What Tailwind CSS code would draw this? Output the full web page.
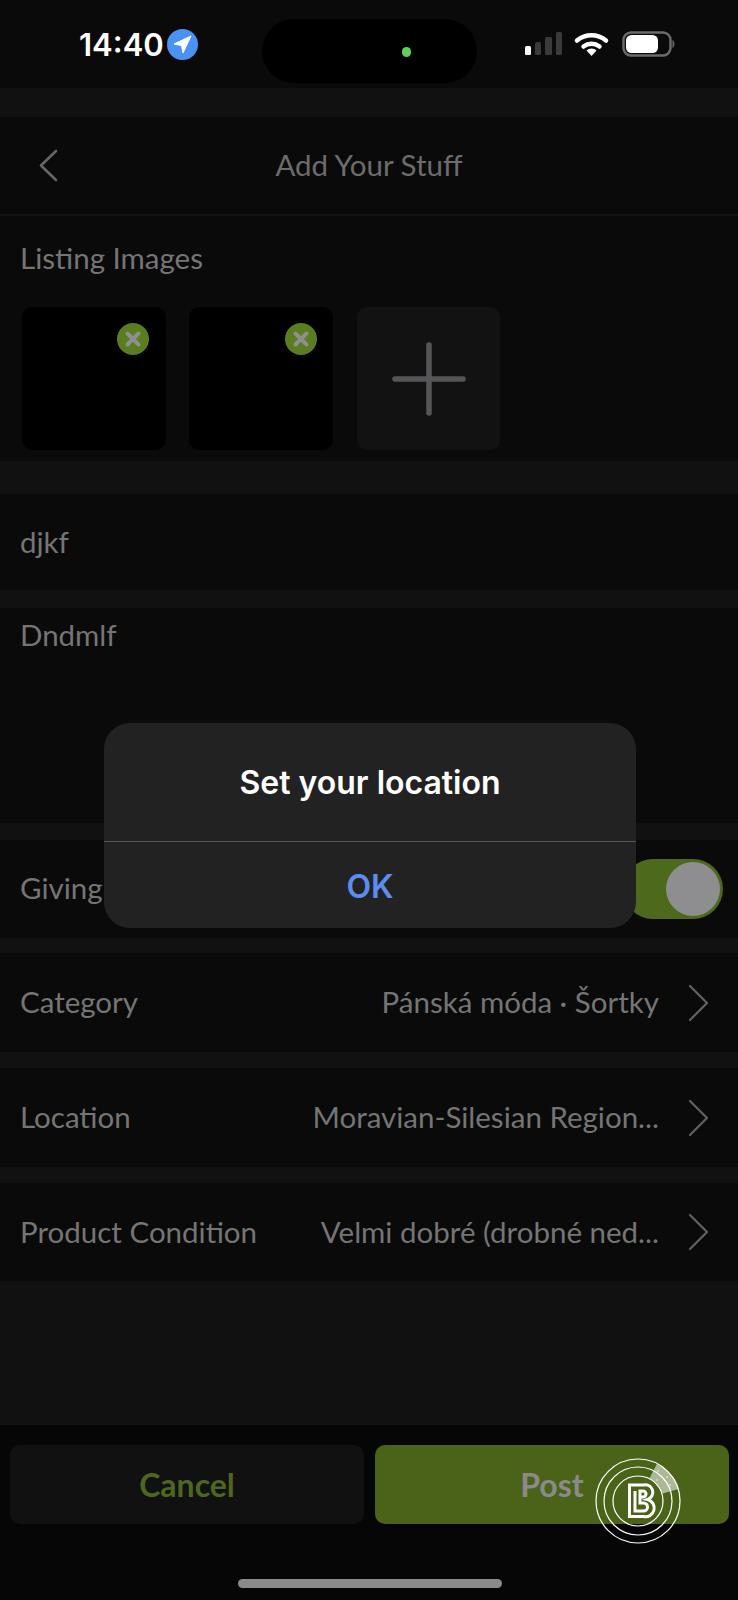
<!DOCTYPE html>
<html>
<head>
<meta charset="utf-8">
<script src="https://cdn.jsdelivr.net/npm/@tailwindcss/browser@4"></script>
</head>
<body class="m-0 bg-[#111111]">
<div class="relative w-[738px] h-[1600px] overflow-hidden flex flex-col bg-[#111111] font-['Lato','Liberation_Sans',sans-serif] text-[29.5px] text-[#757575]">

  <!-- status bar -->
  <div class="h-[88px] shrink-0 bg-[#0a0a0a] flex items-center pl-[79px]">
    <span class="w-[84px] font-['Inter',sans-serif] font-semibold text-[31px] text-white leading-none">14:40</span>
    <svg class="ml-[4px]" width="31" height="31" viewBox="0 0 31 31"><circle cx="15.5" cy="15.5" r="15.5" fill="#4a93f5"/><path d="M24 7 L7 15 L14.5 16.5 L16 24 Z" fill="#fff" stroke="#fff" stroke-width="1" stroke-linejoin="round"/></svg>
    <div class="ml-[64px] w-[215px] h-[64px] mt-[13px] rounded-[32px] bg-black flex items-center justify-start pl-[140px]">
      <span class="block w-[9px] h-[10px] rounded-full bg-[#5fcf5f] mt-[2px]"></span>
    </div>
    <svg class="ml-[48px]" width="150" height="30" viewBox="0 0 150 30">
      <rect x="0" y="17" width="6" height="9" rx="1.5" fill="#fff"/>
      <rect x="10" y="13" width="6" height="13" rx="1.5" fill="#3a3a3a"/>
      <rect x="20" y="8" width="7" height="18" rx="1.5" fill="#3a3a3a"/>
      <rect x="31" y="3" width="6" height="23" rx="1.5" fill="#3a3a3a"/>
      <path d="M52 11.5 A23 23 0 0 1 81 11.5" fill="none" stroke="#fff" stroke-width="4.5" stroke-linecap="round"/>
      <path d="M58.5 17.5 A13.5 13.5 0 0 1 74.5 17.5" fill="none" stroke="#fff" stroke-width="4.5" stroke-linecap="round"/>
      <path d="M66.5 27 L61.5 21.5 A7 7 0 0 1 71.5 21.5 Z" fill="#fff"/>
      <rect x="98.5" y="3.5" width="47" height="23" rx="7.5" fill="none" stroke="#6a6a6a" stroke-width="2.5"/>
      <rect x="101" y="6" width="32" height="18" rx="5.5" fill="#fff"/>
      <path d="M147.5 11 C150 12 150 18 147.5 19 Z" fill="#6a6a6a"/>
    </svg>
  </div>

  <!-- header -->
  <div class="mt-[29px] h-[99px] shrink-0 bg-[#0a0a0a] border-b-2 border-[#141414] flex items-center justify-center relative">
    <svg class="absolute left-[37px] top-[31px]" width="22" height="35" viewBox="0 0 22 35"><path d="M19 3 L4 17.5 L19 32" fill="none" stroke="#666666" stroke-width="2.6" stroke-linecap="round" stroke-linejoin="round"/></svg>
    <span class="text-[#6c6c6c]">Add Your Stuff</span>
  </div>

  <!-- listing images -->
  <div class="h-[245px] shrink-0 bg-[#0a0a0a] pl-[22px] relative">
    <div class="absolute left-[20px] top-[23px] leading-[38px]">Listing Images</div>
    <div class="pt-[91px] flex">
      <div class="relative w-[144px] h-[143px] rounded-[10px] bg-black">
        <svg class="absolute left-[95px] top-[16px]" width="32" height="32" viewBox="0 0 32 32"><circle cx="16" cy="16" r="16" fill="#5a7d20"/><path d="M10.5 10.5 L21.5 21.5 M21.5 10.5 L10.5 21.5" stroke="#8f8f8f" stroke-width="4" stroke-linecap="round"/></svg>
      </div>
      <div class="relative ml-[23px] w-[144px] h-[143px] rounded-[10px] bg-black">
        <svg class="absolute left-[96px] top-[16px]" width="32" height="32" viewBox="0 0 32 32"><circle cx="16" cy="16" r="16" fill="#5a7d20"/><path d="M10.5 10.5 L21.5 21.5 M21.5 10.5 L10.5 21.5" stroke="#8f8f8f" stroke-width="4" stroke-linecap="round"/></svg>
      </div>
      <div class="ml-[24px] w-[143px] h-[143px] rounded-[10px] bg-[#121212] flex items-center justify-center">
        <svg width="74" height="74" viewBox="0 0 74 74"><path d="M37 3 V71 M3 37 H71" stroke="#565658" stroke-width="5.5" stroke-linecap="round"/></svg>
      </div>
    </div>
  </div>

  <!-- title -->
  <div class="mt-[33px] h-[96px] shrink-0 bg-[#0a0a0a] flex items-center px-[20px]">djkf</div>

  <!-- description -->
  <div class="mt-[18px] h-[215px] shrink-0 bg-[#0a0a0a] px-[20px] pt-[8px] leading-[38px]">Dndmlf</div>

  <!-- giving -->
  <div class="mt-[17px] h-[98px] shrink-0 bg-[#0a0a0a] flex items-center justify-between pl-[20px] pr-[15px]">
    <span class="-mt-[2px]">Giving</span>
    <div class="w-[100px] h-[60px] rounded-[30px] bg-[#4d6a1c] flex items-center justify-end pr-[3px]">
      <span class="block w-[54px] h-[54px] rounded-full bg-[#8e8e90]"></span>
    </div>
  </div>

  <!-- category -->
  <div class="mt-[15px] h-[99px] shrink-0 bg-[#0a0a0a] flex items-center pl-[20px] pr-[28px]">
    <span>Category</span>
    <span class="ml-auto">Pánská móda · Šortky</span>
    <svg class="ml-[28px]" width="23" height="38" viewBox="0 0 23 38"><path d="M3 2 L20 19 L3 36" fill="none" stroke="#626262" stroke-width="2.2" stroke-linecap="round" stroke-linejoin="round"/></svg>
  </div>

  <!-- location -->
  <div class="mt-[16px] h-[99px] shrink-0 bg-[#0a0a0a] flex items-center pl-[20px] pr-[28px]">
    <span>Location</span>
    <span class="ml-auto">Moravian-Silesian Region...</span>
    <svg class="ml-[28px]" width="23" height="38" viewBox="0 0 23 38"><path d="M3 2 L20 19 L3 36" fill="none" stroke="#626262" stroke-width="2.2" stroke-linecap="round" stroke-linejoin="round"/></svg>
  </div>

  <!-- condition -->
  <div class="mt-[16px] h-[98px] shrink-0 bg-[#0a0a0a] flex items-center pl-[20px] pr-[28px]">
    <span>Product Condition</span>
    <span class="ml-auto">Velmi dobré (drobné ned...</span>
    <svg class="ml-[28px]" width="23" height="38" viewBox="0 0 23 38"><path d="M3 2 L20 19 L3 36" fill="none" stroke="#626262" stroke-width="2.2" stroke-linecap="round" stroke-linejoin="round"/></svg>
  </div>

  <!-- footer -->
  <div class="mt-auto h-[175px] shrink-0 bg-[#060606] pt-[20px] pl-[10px] pr-[9px] flex flex-col items-center">
    <div class="w-full flex gap-[11px]">
      <div class="flex-1 h-[79px] rounded-[10px] bg-[#111111] flex items-center justify-center font-bold text-[32px] text-[#4f6620]">Cancel</div>
      <div class="flex-1 h-[79px] rounded-[10px] bg-[#4a6319] flex items-center justify-center font-bold text-[32px] text-[#8a8a8a]">Post</div>
    </div>
    <div class="mt-[55px] w-[264px] h-[9px] rounded-full bg-[#8a8a8a]"></div>
  </div>

  <!-- alert -->
  <div class="absolute left-[104px] top-[723px] w-[532px] h-[205px] rounded-[26px] bg-[#222222] flex flex-col font-['Inter',sans-serif]">
    <div class="h-[119px] flex items-center justify-center pt-[1px] text-[32px] font-semibold text-white border-b border-[#555555]">Set your location</div>
    <div class="flex-1 flex items-center justify-center pt-[3px] text-[32px] font-semibold text-[#5b8def]">OK</div>
  </div>

  <!-- watermark -->
  <svg class="absolute left-[593px] top-[1456px]" width="90" height="90" viewBox="0 0 90 90">
    <path d="M56.3 22.7 L64 7.7 A42 42 0 0 1 86 32.7 L69 37.8 A25 25 0 0 0 56.3 22.7 Z" fill="#ffffff" fill-opacity="0.55"/>
    <g fill="#ffffff"><circle cx="64" cy="24" r="0.7"/><circle cx="74" cy="21" r="0.7"/><circle cx="65" cy="15" r="0.7"/><circle cx="77" cy="29" r="0.7"/></g>
    <g fill="none" stroke="#ffffff" stroke-width="1.2">
      <circle cx="45" cy="45" r="42"/>
      <circle cx="45" cy="45" r="34"/>
      <circle cx="45" cy="45" r="25"/>
    </g>
    <g fill="none" stroke="#ffffff" stroke-width="3">
      <path d="M36.5 29 H50 A7 7 0 0 1 54.5 43.5 A8.5 8.5 0 0 1 50.5 60.5 H36.5 Z"/>
      <path d="M42 35 V55 H50.5 A4 4 0 0 0 50.5 47 H47 V35 H50 A3 3 0 0 1 50 41 H47"/>
    </g>
  </svg>
</div>
</body>
</html>
